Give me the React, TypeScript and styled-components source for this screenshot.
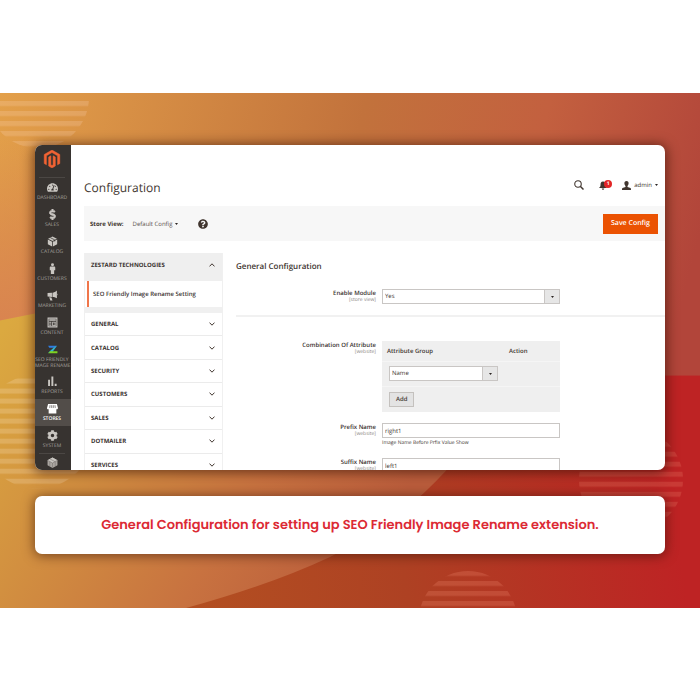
import React from "react";
import styled, { createGlobalStyle, css } from "styled-components";
import {
  FaMagento,
  FaTachometerAlt,
  FaDollarSign,
  FaCog,
  FaQuestionCircle,
} from "react-icons/fa";

const GlobalStyle = createGlobalStyle`
  *, *::before, *::after { box-sizing: border-box; }
  body {
    margin: 0;
    background: #fff;
    color: #41362f;
    font-family: "Open Sans", "Noto Sans", sans-serif;
    text-rendering: geometricPrecision;
  }
  button, input, select { font-family: inherit; color: inherit; margin: 0; text-rendering: inherit; }
`;

const Page = styled.main`
  padding: 93px 0;
`;

const Banner = styled.section`
  position: relative;
  padding: 52px 35px 54px;
  overflow: hidden;
`;

const Artwork = styled.svg`
  position: absolute;
  inset: 0;
  width: 100%;
  height: 100%;
`;

const Window = styled.div`
  position: relative;
  display: flex;
  height: 325px;
  overflow: hidden;
  background: #fff;
  border-radius: 7px;
`;

const WindowShadow = styled.div`
  position: relative;
  border-radius: 7px;
  box-shadow: 0 1px 12px 2px rgba(50, 15, 5, 0.6);
`;

const Caption = styled.p`
  position: relative;
  margin: 26px 0 0;
  padding: 19px 20px;
  background: #fff;
  border-radius: 7px;
  box-shadow: 0 1px 12px 1px rgba(50, 15, 5, 0.55);
  color: #dc2a34;
  font-family: Poppins, Inter, sans-serif;
  font-size: 13px;
  line-height: 20px;
  font-weight: 600;
  text-align: center;
`;

const Sidebar = styled.nav`
  flex: 0 0 36px;
  min-width: 0;
  overflow: hidden;
  background: #373330;
`;

const Brand = styled.a`
  display: flex;
  justify-content: center;
  height: 33px;
  margin: 0 6px 0 4px;
  padding-top: 5px;
  border-bottom: 1px solid #4b4744;
  color: #f26334;
  svg { width: 18px; height: 18px; stroke: #f26334; stroke-width: 14px; }
`;

const MenuLink = styled.a<{ $active?: boolean; $tall?: boolean; $rule?: boolean }>`
  display: flex;
  flex-direction: column;
  align-items: center;
  height: ${(p) => (p.$tall ? 32 : 27)}px;
  padding: 4px 2px 0 0;
  color: ${(p) => (p.$active ? "#fff" : "#aaa6a0")};
  background: ${(p) => (p.$active ? "#524d49" : "transparent")};
  font-size: 5px;
  line-height: 6px;
  font-weight: ${(p) => (p.$active ? 600 : 400)};
  text-align: center;
  text-decoration: none;
  text-transform: uppercase;
  white-space: nowrap;
  svg {
    flex: none;
    width: 11px;
    height: 11px;
    margin-bottom: 2px;
    color: ${(p) => (p.$active ? "#fff" : "#c9c6c1")};
  }
  ${(p) => p.$rule && css`
    margin: 0 6px 0 4px;
    border-top: 1px solid #4b4744;
    padding: 3px 0 0;
  `}
`;

const Content = styled.div`
  flex: 1;
  min-width: 0;
  padding-left: 13px;
`;

const Header = styled.header`
  display: flex;
  align-items: center;
  justify-content: space-between;
  height: 61px;
  padding: 24px 7px 0 0;
`;

const Title = styled.h1`
  margin: 0;
  font-size: 12px;
  line-height: 20px;
  font-weight: 400;
`;

const Tools = styled.div`
  display: flex;
  align-items: center;
  height: 20px;
  margin-top: -5px;
`;

const ToolButton = styled.button<{ $gap?: number }>`
  position: relative;
  display: flex;
  align-items: center;
  gap: 3px;
  margin-left: ${(p) => p.$gap ?? 0}px;
  padding: 0;
  border: 0;
  background: none;
  color: #41362f;
  font-size: 6px;
  line-height: 10px;
`;

const Count = styled.span`
  position: absolute;
  top: -1px;
  right: -5px;
  width: 8px;
  height: 8px;
  border-radius: 50%;
  background: #e22626;
  color: #fff;
  font-size: 5px;
  line-height: 8px;
  font-weight: 700;
  text-align: center;
`;

const Toolbar = styled.div`
  display: flex;
  align-items: center;
  height: 35px;
  padding: 0 7px 0 6px;
  background: #f7f7f7;
  font-size: 6px;
`;

const StoreLabel = styled.span`
  font-weight: 700;
`;

const StoreButton = styled.button`
  display: flex;
  align-items: center;
  gap: 3px;
  margin: 0 20px 0 9px;
  padding: 0;
  border: 0;
  background: none;
  color: #5a524d;
  font-size: 6px;
`;

const Help = styled.button`
  display: flex;
  padding: 0;
  border: 0;
  background: none;
  svg { width: 10px; height: 10px; }
`;

const SaveButton = styled.button`
  height: 20px;
  margin-left: auto;
  padding: 0 7px;
  border: 1px solid #eb5202;
  background: #eb5202;
  font-size: 7px;
  line-height: 18px;
  font-weight: 600;
  && { color: #fff; }
`;

const Columns = styled.div`
  display: flex;
  align-items: flex-start;
  gap: 13px;
  padding-top: 12px;
`;

const Sections = styled.nav`
  flex: 0 0 139px;
  border: solid #f0f0f0;
  border-width: 0 1px;
`;

const SectionToggle = styled.button<{ $open?: boolean }>`
  display: flex;
  align-items: center;
  justify-content: space-between;
  width: 100%;
  min-height: ${(p) => (p.$open ? 28 : 23)}px;
  padding: ${(p) => (p.$open ? "0 7px 4px 6px" : "0 7px 0 6px")};
  border: 0;
  border-bottom: ${(p) => (p.$open ? 0 : 1)}px solid #ebebeb;
  background: ${(p) => (p.$open ? "#efefef" : "#fff")};
  color: #3a3230;
  font-size: 6px;
  font-weight: 700;
  text-align: left;
  text-transform: uppercase;
`;

const SectionLink = styled.a`
  display: block;
  height: 26px;
  margin-left: 2px;
  padding-left: 4px;
  border-left: 2px solid #f0764a;
  background: #fff;
  color: #3a3230;
  font-size: 6px;
  line-height: 26px;
  font-weight: 600;
  text-decoration: none;
`;

const SectionGap = styled.div`
  height: 6px;
  background: #f0f0f0;
`;

const SectionList = styled.div`
  display: grid;
  grid-auto-rows: 1fr;
  height: 164px;
`;

const Form = styled.form`
  flex: 1;
  min-width: 0;
`;

const FormTitle = styled.h2`
  margin: 0;
  padding: 8px 0;
  font-size: 8px;
  line-height: 12px;
  font-weight: 600;
`;

const Field = styled.div<{ $top: number }>`
  display: grid;
  grid-template-columns: 140px minmax(0, 178px);
  column-gap: 6px;
  align-items: start;
  padding-top: ${(p) => p.$top}px;
`;

const FieldLabel = styled.label`
  color: #3a3230;
  font-size: 6px;
  line-height: 8px;
  font-weight: 600;
  text-align: right;
  small {
    display: block;
    color: #8c8886;
    font-size: 5px;
    line-height: 6px;
    font-weight: 400;
  }
`;

const Divider = styled.hr`
  margin: 11px 0 0;
  border: 0;
  border-top: 2px solid #f1f1f1;
`;

const inputStyle = css`
  display: block;
  width: 100%;
  height: 15px;
  padding: 0 2px;
  border: 1px solid #c9c6c4;
  border-radius: 0;
  background: #fff;
  font-size: 6px;
  line-height: 13px;
`;

const Input = styled.input`
  ${inputStyle}
`;

const SelectBox = styled.div`
  position: relative;
`;

const Select = styled.select`
  ${inputStyle}
  appearance: none;
`;

const SelectArrow = styled.span`
  position: absolute;
  top: 0;
  right: 0;
  bottom: 0;
  display: flex;
  align-items: center;
  justify-content: center;
  width: 16px;
  border: 1px solid #c9c6c4;
  background: #e6e6e6;
  pointer-events: none;
`;

const Note = styled.p`
  margin: 1px 0 0;
  font-size: 5px;
  line-height: 8px;
`;

const AttributeTable = styled.table`
  width: 100%;
  border-collapse: collapse;
  table-layout: fixed;
  background: #efefef;
  font-size: 6px;
  th {
    height: 20px;
    padding: 0 5px;
    font-weight: 600;
    text-align: left;
  }
  td {
    height: 25px;
    padding: 0 0 0 7px;
    border-top: 1px solid #f5f5f5;
  }
  tfoot td { height: 26px; }
`;

const WideColumn = styled.col`
  width: 122px;
`;

const SelectCell = styled.td`
  && { padding-right: 6px; }
`;

const AddButton = styled.button`
  height: 15px;
  padding: 0 6px;
  border: 1px solid #c4c1be;
  background: #e3e3e3;
  font-size: 6px;
  line-height: 13px;
  font-weight: 600;
  vertical-align: middle;
`;

const Caret = () => (
  <svg width="3" height="2" viewBox="0 0 3 2" aria-hidden="true">
    <path d="M0 0h3L1.500 2z" fill="#2c2624" />
  </svg>
);

const Chevron = ({ up }: { up?: boolean }) => (
  <svg width="6" height="4" viewBox="0 0 6 4" aria-hidden="true">
    <path d={up ? "M.5 3.4 3 .8l2.5 2.6" : "M.5.6 3 3.2 5.500.6"} fill="none" stroke="#41362f" strokeWidth="1" />
  </svg>
);

const CatalogIcon = () => (
  <svg viewBox="0 0 20 20" fill="currentColor" aria-hidden="true">
    <path d="m10 1 8 4-8 4.200L2 5zM1.500 6.500 9.300 10.500V19l-7.800-4zM18.500 6.500l-7.800 4V19l7.800-4z" />
    <path d="m6 3 8 4v3" fill="none" stroke="#373330" strokeWidth="1.300" />
  </svg>
);

const CustomersIcon = () => (
  <svg viewBox="0 0 20 20" fill="currentColor" aria-hidden="true">
    <circle cx="10" cy="3" r="2.700" />
    <path d="M7 6.500h6c1.500 0 2 1 2 2V13h-2v7H7v-7H5V8.500c0-1 .5-2 2-2z" />
  </svg>
);

const MarketingIcon = () => (
  <svg viewBox="0 0 20 20" fill="currentColor" aria-hidden="true">
    <path d="M18 1v14c-3-2-5-2.500-8-2.500V5c3 0 5-1.500 8-4zM1 5.500 9 5v7.500L1 12zM4 13l4 .5L10 19H6z" />
    <path d="M18 6.500c1.500.5 1.500 3 0 3.500z" />
  </svg>
);

const ContentIcon = () => (
  <svg viewBox="0 0 20 20" fill="currentColor" aria-hidden="true">
    <path fillRule="evenodd" d="M1 1h18v18H1zM3 3v14h14V3z" />
    <path d="M4 4h12v3H4zM4 8.500h4v2H4zM4 12h4v1.500H4zM4 15h4v1.500H4zM9.500 8.500H16v8H9.500z" />
    <path d="M11 10h1.500v5H11zM13.500 10H15v5h-1.500z" fill="#373330" />
  </svg>
);

const ZIcon = () => (
  <svg viewBox="0 0 20 20" aria-hidden="true">
    <path d="M2 3h16l-3 4H4z" fill="#2f7de0" />
    <path d="M18 3 9 16H2L12 7z" fill="#35b6c8" />
    <path d="M6 13h13v4H2z" fill="#7ed321" />
  </svg>
);

const ReportsIcon = () => (
  <svg viewBox="0 0 20 20" fill="currentColor" aria-hidden="true">
    <path d="M2 7h3.500v11H2zM8 1h3.500v17H8zM14 14h3.500v4H14z" />
  </svg>
);

const StoresIcon = () => (
  <svg viewBox="0 0 20 20" fill="currentColor" aria-hidden="true">
    <path d="M2 2h16l2 7c0 2-2 3-3 2.200V19H3v-7.800C1 12 0 11 0 9z" />
    <path d="M5.500 4 5 9M8.500 4v5M11.500 4v5M14.500 4l.5 5" stroke="#524d49" strokeWidth="1.200" />
  </svg>
);

const PartnersIcon = () => (
  <svg viewBox="0 0 20 20" aria-hidden="true">
    <path d="m10 1 9 5v9l-9 5-9-5V6z" fill="#aaa6a0" />
    <path d="m10 1 9 5-9 5-9-5z" fill="#c9c6c1" />
    <path d="M10 11v8M1 6l9 5 9-5M5 8.500v8M15 8.500v8M5.500 3.500l9 5" fill="none" stroke="#77726e" strokeWidth="1" />
  </svg>
);

const SearchIcon = () => (
  <svg width="10" height="10" viewBox="0 0 20 20" fill="none" stroke="#41362f" aria-hidden="true">
    <circle cx="8" cy="8" r="6.500" strokeWidth="2.200" />
    <path d="m13 13 6 6" strokeWidth="3" />
  </svg>
);

const BellIcon = () => (
  <svg width="8" height="9" viewBox="0 0 16 18" fill="#41362f" aria-hidden="true">
    <path d="M8 1c4 0 5 3 5 7 0 3 1 4 3 6H0c2-2 3-3 3-6 0-4 1-7 5-7zM5.500 15h5a2.500 2.500 0 0 1-5 0z" />
  </svg>
);

const UserIcon = () => (
  <svg width="9" height="9" viewBox="0 0 18 18" fill="#41362f" aria-hidden="true">
    <path d="M9 0c3 0 4.500 2 4.200 5-.2 2.500-1.200 4-2.200 5v2l6 2c.8.500 1 1.500 1 4H0c0-2.500.2-3.500 1-4l6-2v-2C6 9 5 7.500 4.800 5 4.500 2 6 0 9 0z" />
  </svg>
);

const stripedCircles = [
  { id: "a", cx: 38, cy: 4, r: 51, top: 7, offset: -2, color: "#ffdcc8", opacity: 0.2 },
  { id: "b", cx: 37, cy: 338, r: 57, top: 281, offset: -5, color: "#ffeed8", opacity: 0.2 },
  { id: "c", cx: 631, cy: 386, r: 52, top: 334, offset: -2, color: "#f08a70", opacity: 0.22 },
  { id: "d", cx: 468, cy: 526, r: 49, top: 477, offset: -3, color: "#f08a70", opacity: 0.25 },
];

const Backdrop = () => (
  <Artwork viewBox="0 0 700 514" preserveAspectRatio="none" aria-hidden="true">
    <defs>
      <linearGradient id="base" gradientUnits="userSpaceOnUse" x1="180" y1="514" x2="680" y2="450">
        <stop offset="0" stopColor="#b35021" />
        <stop offset="0.45" stopColor="#ae4123" />
        <stop offset="1" stopColor="#be2324" />
      </linearGradient>
      <linearGradient id="upper" gradientUnits="userSpaceOnUse" x1="0" y1="0" x2="690" y2="180">
        <stop offset="0" stopColor="#e3a04a" />
        <stop offset="0.5" stopColor="#c2723c" />
        <stop offset="0.75" stopColor="#c3603f" />
        <stop offset="1" stopColor="#b2453a" />
      </linearGradient>
      <linearGradient id="leftTint" x1="0" y1="0" x2="0" y2="1">
        <stop offset="0.2" stopColor="#d98450" stopOpacity="0" />
        <stop offset="1" stopColor="#d98450" />
      </linearGradient>
      <linearGradient id="lower" gradientUnits="userSpaceOnUse" x1="0" y1="240" x2="360" y2="470">
        <stop offset="0" stopColor="#dba940" />
        <stop offset="0.4" stopColor="#d08a40" />
        <stop offset="0.7" stopColor="#c87240" />
        <stop offset="1" stopColor="#bb5d3c" />
      </linearGradient>
      {stripedCircles.map((c) => (
        <React.Fragment key={c.id}>
          <clipPath id={"clip-" + c.id}>
            <circle cx={c.cx} cy={c.cy} r={c.r} />
          </clipPath>
          <pattern id={"lines-" + c.id} width="10" height="10" y={c.offset} patternUnits="userSpaceOnUse">
            <rect width="10" height="5" fill={c.color} />
          </pattern>
        </React.Fragment>
      ))}
    </defs>
    <rect width="700" height="514" fill="url(#base)" />
    <rect width="700" height="282" fill="url(#upper)" />
    <rect width="60" height="230" fill="url(#leftTint)" />
    <path d="M0 227 60 215 480 282Q470 352 445 378 395 432 330 463 270 491 186 514H0z" fill="url(#lower)" />
    {stripedCircles.map((c) => (
      <g key={c.id} clipPath={"url(#clip-" + c.id + ")"} opacity={c.opacity}>
        <rect x={c.cx - c.r} y={c.top} width={2 * c.r} height={2 * c.r} fill={"url(#lines-" + c.id + ")"} />
      </g>
    ))}
  </Artwork>
);

const menu = [
  { label: "Dashboard", icon: <FaTachometerAlt /> },
  { label: "Sales", icon: <FaDollarSign stroke="currentColor" strokeWidth={30} /> },
  { label: "Catalog", icon: <CatalogIcon /> },
  { label: "Customers", icon: <CustomersIcon /> },
  { label: "Marketing", icon: <MarketingIcon /> },
  { label: "Content", icon: <ContentIcon /> },
  { label: "SEO Friendly Image Rename", lines: ["SEO Friendly", "Image Rename"], icon: <ZIcon /> },
  { label: "Reports", icon: <ReportsIcon /> },
  { label: "Stores", icon: <StoresIcon />, active: true },
  { label: "System", icon: <FaCog /> },
];

const sections = ["General", "Catalog", "Security", "Customers", "Sales", "Dotmailer", "Services"];

export default function App() {
  return (
    <Page>
      <GlobalStyle />
      <Banner>
        <Backdrop />
        <WindowShadow>
          <Window>
            <Sidebar>
              <Brand href="#" aria-label="Magento">
                <FaMagento />
              </Brand>
              {menu.map((m) => (
                <MenuLink key={m.label} href="#" $active={m.active} $tall={!!m.lines}>
                  {m.icon}
                  {(m.lines ?? [m.label]).map((line) => (
                    <span key={line}>{line}</span>
                  ))}
                </MenuLink>
              ))}
              <MenuLink href="#" aria-label="Find Partners" $rule>
                <PartnersIcon />
              </MenuLink>
            </Sidebar>
            <Content>
              <Header>
                <Title>Configuration</Title>
                <Tools>
                  <ToolButton aria-label="Search">
                    <SearchIcon />
                  </ToolButton>
                  <ToolButton $gap={15} aria-label="Notifications">
                    <BellIcon />
                    <Count>1</Count>
                  </ToolButton>
                  <ToolButton $gap={15}>
                    <UserIcon />
                    admin
                    <Caret />
                  </ToolButton>
                </Tools>
              </Header>
              <Toolbar>
                <StoreLabel>Store View:</StoreLabel>
                <StoreButton>
                  Default Config
                  <Caret />
                </StoreButton>
                <Help aria-label="Help">
                  <FaQuestionCircle />
                </Help>
                <SaveButton>Save Config</SaveButton>
              </Toolbar>
              <Columns>
                <Sections>
                  <SectionToggle $open>
                    Zestard Technologies
                    <Chevron up />
                  </SectionToggle>
                  <SectionLink href="#">SEO Friendly Image Rename Setting</SectionLink>
                  <SectionGap />
                  <SectionList>
                    {sections.map((s) => (
                      <SectionToggle key={s}>
                        {s}
                        <Chevron />
                      </SectionToggle>
                    ))}
                  </SectionList>
                </Sections>
                <Form onSubmit={(e) => e.preventDefault()}>
                  <FormTitle>General Configuration</FormTitle>
                  <Field $top={8}>
                    <FieldLabel htmlFor="enable">
                      Enable Module<small>[store view]</small>
                    </FieldLabel>
                    <SelectBox>
                      <Select id="enable" defaultValue="Yes">
                        <option>Yes</option>
                        <option>No</option>
                      </Select>
                      <SelectArrow>
                        <Caret />
                      </SelectArrow>
                    </SelectBox>
                  </Field>
                  <Divider />
                  <Field $top={24}>
                    <FieldLabel htmlFor="attribute">
                      Combination Of Attribute<small>[website]</small>
                    </FieldLabel>
                    <AttributeTable>
                      <colgroup>
                        <WideColumn />
                        <col />
                      </colgroup>
                      <thead>
                        <tr>
                          <th>Attribute Group</th>
                          <th>Action</th>
                        </tr>
                      </thead>
                      <tbody>
                        <tr>
                          <SelectCell>
                            <SelectBox>
                              <Select id="attribute" defaultValue="Name">
                                <option>Name</option>
                              </Select>
                              <SelectArrow>
                                <Caret />
                              </SelectArrow>
                            </SelectBox>
                          </SelectCell>
                          <td />
                        </tr>
                      </tbody>
                      <tfoot>
                        <tr>
                          <td colSpan={2}>
                            <AddButton type="button">Add</AddButton>
                          </td>
                        </tr>
                      </tfoot>
                    </AttributeTable>
                  </Field>
                  <Field $top={11}>
                    <FieldLabel htmlFor="prefix">
                      Prefix Name<small>[website]</small>
                    </FieldLabel>
                    <div>
                      <Input id="prefix" defaultValue="right1" />
                      <Note>Image Name Before Prfix Value Show</Note>
                    </div>
                  </Field>
                  <Field $top={11}>
                    <FieldLabel htmlFor="suffix">
                      Suffix Name<small>[website]</small>
                    </FieldLabel>
                    <Input id="suffix" defaultValue="left1" />
                  </Field>
                </Form>
              </Columns>
            </Content>
          </Window>
        </WindowShadow>
        <Caption>General Configuration for setting up SEO Friendly Image Rename extension.</Caption>
      </Banner>
    </Page>
  );
}
